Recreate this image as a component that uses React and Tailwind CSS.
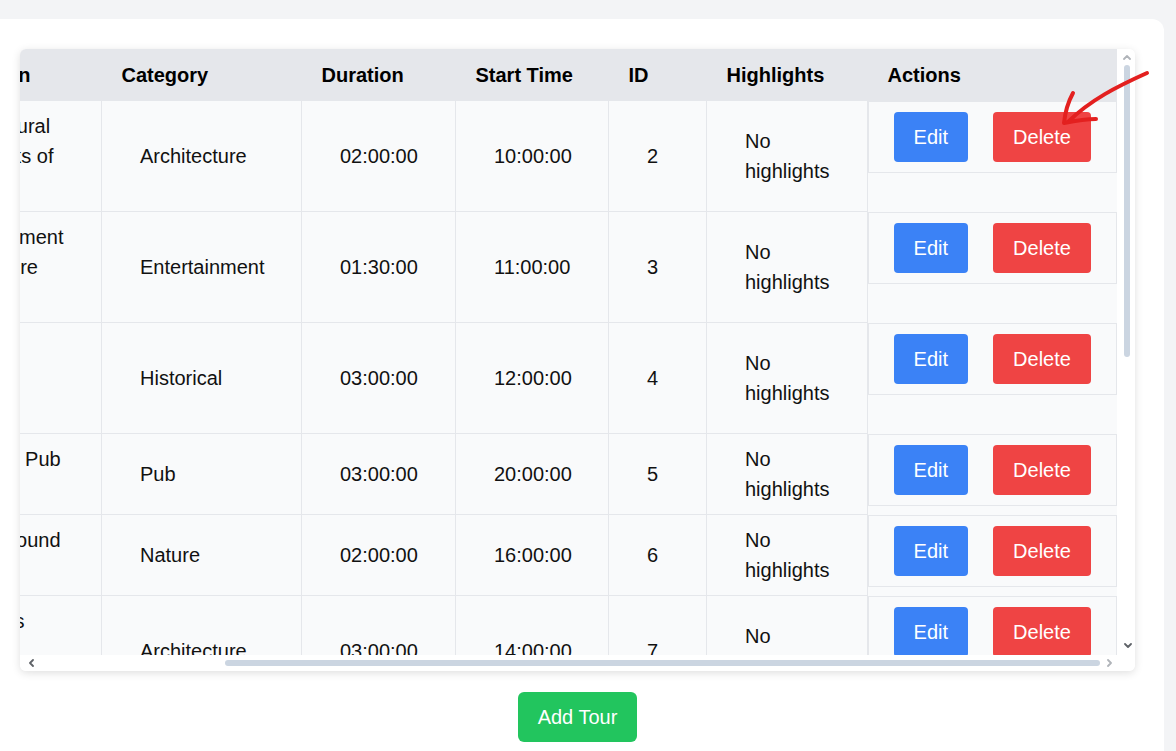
import React, { useLayoutEffect, useRef } from "react";

const rows = [
  { name: "City Walk", desc: "Architectural landmarks of Cork city", cat: "Architecture", dur: "02:00:00", start: "10:00:00", id: 2 },
  { name: "Night Out", desc: "Entertainment and culture night", cat: "Entertainment", dur: "01:30:00", start: "11:00:00", id: 3 },
  { name: "Old Town", desc: "Medieval history, castles", cat: "Historical", dur: "03:00:00", start: "12:00:00", id: 4 },
  { name: "Pub Tour", desc: "Galway's Pub crawl", cat: "Pub", dur: "03:00:00", start: "20:00:00", id: 5 },
  { name: "Lakes", desc: "Walks around the lakes", cat: "Nature", dur: "02:00:00", start: "16:00:00", id: 6 },
  { name: "Sacred", desc: "Churches steeples cathedrals", cat: "Architecture", dur: "03:00:00", start: "14:00:00", id: 7 },
  { name: "Harbour", desc: "Boats along the harbour front", cat: "Nature", dur: "01:00:00", start: "09:00:00", id: 8 },
  { name: "Castle", desc: "Castles of the medieval kings", cat: "Historical", dur: "02:30:00", start: "13:00:00", id: 9 },
  { name: "Music", desc: "Live music and the late show", cat: "Entertainment", dur: "02:00:00", start: "21:00:00", id: 10 },
  { name: "Gardens", desc: "Parks and gardens of the city", cat: "Nature", dur: "01:30:00", start: "15:00:00", id: 11 },
  { name: "Brewery", desc: "Brewery visit and tasting tour", cat: "Pub", dur: "02:00:00", start: "18:00:00", id: 12 },
];

const headers = [
  { label: "Name", w: "w-[118px]" },
  { label: "Description", w: "w-[201px]" },
  { label: "Category", w: "w-[200px]" },
  { label: "Duration", w: "w-[154px]" },
  { label: "Start Time", w: "w-[153px]" },
  { label: "ID", w: "w-[98px]" },
  { label: "Highlights", w: "w-[161px]" },
  { label: "Actions", w: "w-[249px]" },
];

function Chevron({ dir, color }) {
  const d = {
    up: "M1 5 L4 2 L7 5",
    down: "M1 2 L4 5 L7 2",
    left: "M5 1 L2 4 L5 7",
    right: "M2 1 L5 4 L2 7",
  }[dir];
  const w = dir === "up" || dir === "down" ? 8 : 7;
  const h = dir === "up" || dir === "down" ? 7 : 8;
  return (
    <svg width={w} height={h} viewBox={`0 0 ${w} ${h}`} fill="none">
      <path d={d} stroke={color} strokeWidth="1.8" strokeLinecap="round" strokeLinejoin="round" />
    </svg>
  );
}

export default function App() {
  const ref = useRef(null);
  useLayoutEffect(() => {
    if (ref.current) {
      ref.current.scrollLeft = ref.current.scrollWidth;
      ref.current.scrollTop = 0;
    }
  }, []);

  const td = "border border-[#e5e7eb] pl-[38px] pr-[34px] py-[10px] align-middle";

  return (
    <div
      className="relative min-h-screen bg-[#f3f4f6] pt-[19px] pr-[12px] text-[20px] leading-[30px] text-[#111]"
      style={{ fontFamily: '"Liberation Sans", Arial, sans-serif' }}
    >
      <div className="bg-white rounded-tr-xl pl-[20px] pr-[29px] pt-[30px] pb-[40px]">
        <div className="h-[622px] flex flex-col rounded-md shadow-[0_2px_8px_rgba(0,0,0,0.13)] bg-white overflow-hidden">
          <div className="flex flex-1 min-h-0">
            <div ref={ref} className="flex-1 min-w-0 overflow-hidden">
              <table className="table-fixed border-collapse w-[1334px]">
                <thead>
                  <tr className="bg-[#e5e7eb]">
                    {headers.map((h) => (
                      <th
                        key={h.label}
                        className={`${h.w} px-[20px] pt-[11px] pb-[10px] text-left font-bold text-black whitespace-nowrap`}
                      >
                        {h.label}
                      </th>
                    ))}
                  </tr>
                </thead>
                <tbody>
                  {rows.map((r) => (
                    <tr key={r.id} className="bg-[#f9fafb]">
                      <td className="border border-[#e5e7eb] px-[20px] py-[10px] overflow-hidden">{r.name}</td>
                      <td className={td}>{r.desc}</td>
                      <td className={td}>{r.cat}</td>
                      <td className={td}>{r.dur}</td>
                      <td className={td}>{r.start}</td>
                      <td className={td}>{r.id}</td>
                      <td className={td}>No highlights</td>
                      <td className="p-0 align-top">
                        <div className="flex justify-center gap-[25px] py-[10px] border border-[#e5e7eb]">
                          <button className="bg-[#3b82f6] text-white rounded px-[20px] py-[10px] leading-[30px]">
                            Edit
                          </button>
                          <button className="bg-[#ef4444] text-white rounded px-[20px] py-[10px] leading-[30px]">
                            Delete
                          </button>
                        </div>
                      </td>
                    </tr>
                  ))}
                </tbody>
              </table>
            </div>
            {/* vertical scrollbar */}
            <div className="w-[18px] shrink-0 bg-white flex flex-col">
              <div className="h-[16px] flex items-center justify-center pl-[1px]">
                <Chevron dir="up" color="#b0b4b9" />
              </div>
              <div className="flex justify-center pl-[2px]">
                <div className="w-[6px] h-[292px] rounded-full bg-[#cbd5e1]" />
              </div>
              <div className="flex-1" />
              <div className="h-[16px] pb-[4px] flex items-center justify-center pl-[3px]">
                <Chevron dir="down" color="#5f6368" />
              </div>
            </div>
          </div>
          {/* horizontal scrollbar */}
          <div className="h-[16px] shrink-0 flex items-center bg-white">
            <div className="w-[15px] flex justify-end">
              <Chevron dir="left" color="#5f6368" />
            </div>
            <div className="flex-1 h-full flex items-center pl-[190px] pr-[3px]">
              <div className="h-[6px] w-full rounded-full bg-[#cbd5e1]" />
            </div>
            <div className="w-[14px] flex justify-start pl-[3px]">
              <Chevron dir="right" color="#b0b4b9" />
            </div>
            <div className="w-[18px]" />
          </div>
        </div>
        <div className="flex justify-center mt-[21px]">
          <button className="bg-[#22c55e] text-white rounded-md px-[20px] py-[10px] leading-[30px]">
            Add Tour
          </button>
        </div>
      </div>

      <svg
        className="absolute left-0 top-0 pointer-events-none"
        width="1176"
        height="751"
        viewBox="0 0 1176 751"
        fill="none"
      >
        <path
          d="M1147 73 C1118 86 1090 100 1068 122"
          stroke="#e3201f"
          strokeWidth="4"
          strokeLinecap="round"
          strokeLinejoin="round"
        />
        <path
          d="M1073 93 C1067 104 1065 113 1064 123 C1074 121 1086 119 1096 119"
          stroke="#e3201f"
          strokeWidth="4"
          strokeLinecap="round"
          strokeLinejoin="round"
        />
      </svg>
    </div>
  );
}
